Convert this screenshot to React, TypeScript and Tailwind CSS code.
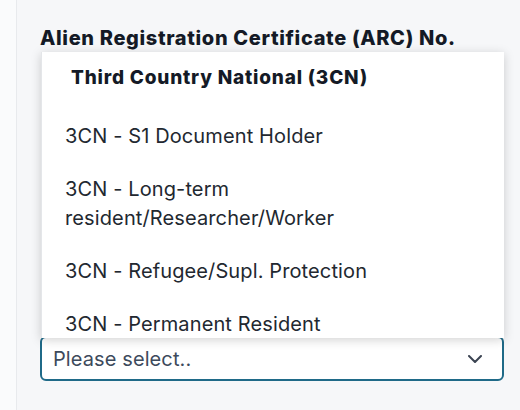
import React from "react";

export default function App() {
  const items: string[][] = [
    ["3CN - S1 Document Holder"],
    ["3CN - Long-term", "resident/Researcher/Worker"],
    ["3CN - Refugee/Supl. Protection"],
    ["3CN - Permanent Resident"],
  ];
  return (
    <div className="w-[520px] h-[410px] bg-[#f6f7f9] flex font-['Inter',sans-serif] overflow-hidden">
      <div className="w-[17px] h-full bg-[#fafbfc] border-r border-[#e8eaed]" />
      <div className="flex-1 pl-[23px] pr-[16px] pt-[26px]">
        <div className="text-[20px] leading-[24px] font-extrabold tracking-[0.65px] text-[#141a26] whitespace-nowrap">
          Alien Registration Certificate (ARC) No.
        </div>
        <div className="relative pt-[286px]">
          <div className="h-[45px] border-2 border-[#1f6a88] rounded-[6px] bg-white pl-[11px] pr-[20px] flex items-center justify-between">
            <span className="text-[20px] tracking-[0.1px] text-[#3d4a5c]">Please select..</span>
            <svg width="14" height="8" viewBox="0 0 14 8" fill="none">
              <polyline points="1,1 7,7 13,1" stroke="#3b4452" strokeWidth="2" strokeLinecap="round" strokeLinejoin="round" />
            </svg>
          </div>
          <div className="absolute top-[2px] left-[1px] right-0 h-[286px] bg-white overflow-hidden shadow-[0_2px_10px_rgba(0,0,0,0.18)] border-l border-[#e4e6e9]">
            <div className="pl-[29px] pt-[11px] pb-[18px] text-[19px] leading-[29px] font-extrabold tracking-[0.8px] text-[#141a26] whitespace-nowrap">
              Third Country National (3CN)
            </div>
            {items.map((lines, i) => (
              <div key={i} className="pl-[23px] py-[12px] text-[20px] leading-[29px] tracking-[0.12px] text-[#222830] whitespace-nowrap">
                {lines.map((l, j) => (
                  <div key={j}>{l}</div>
                ))}
              </div>
            ))}
          </div>
        </div>
      </div>
    </div>
  );
}
